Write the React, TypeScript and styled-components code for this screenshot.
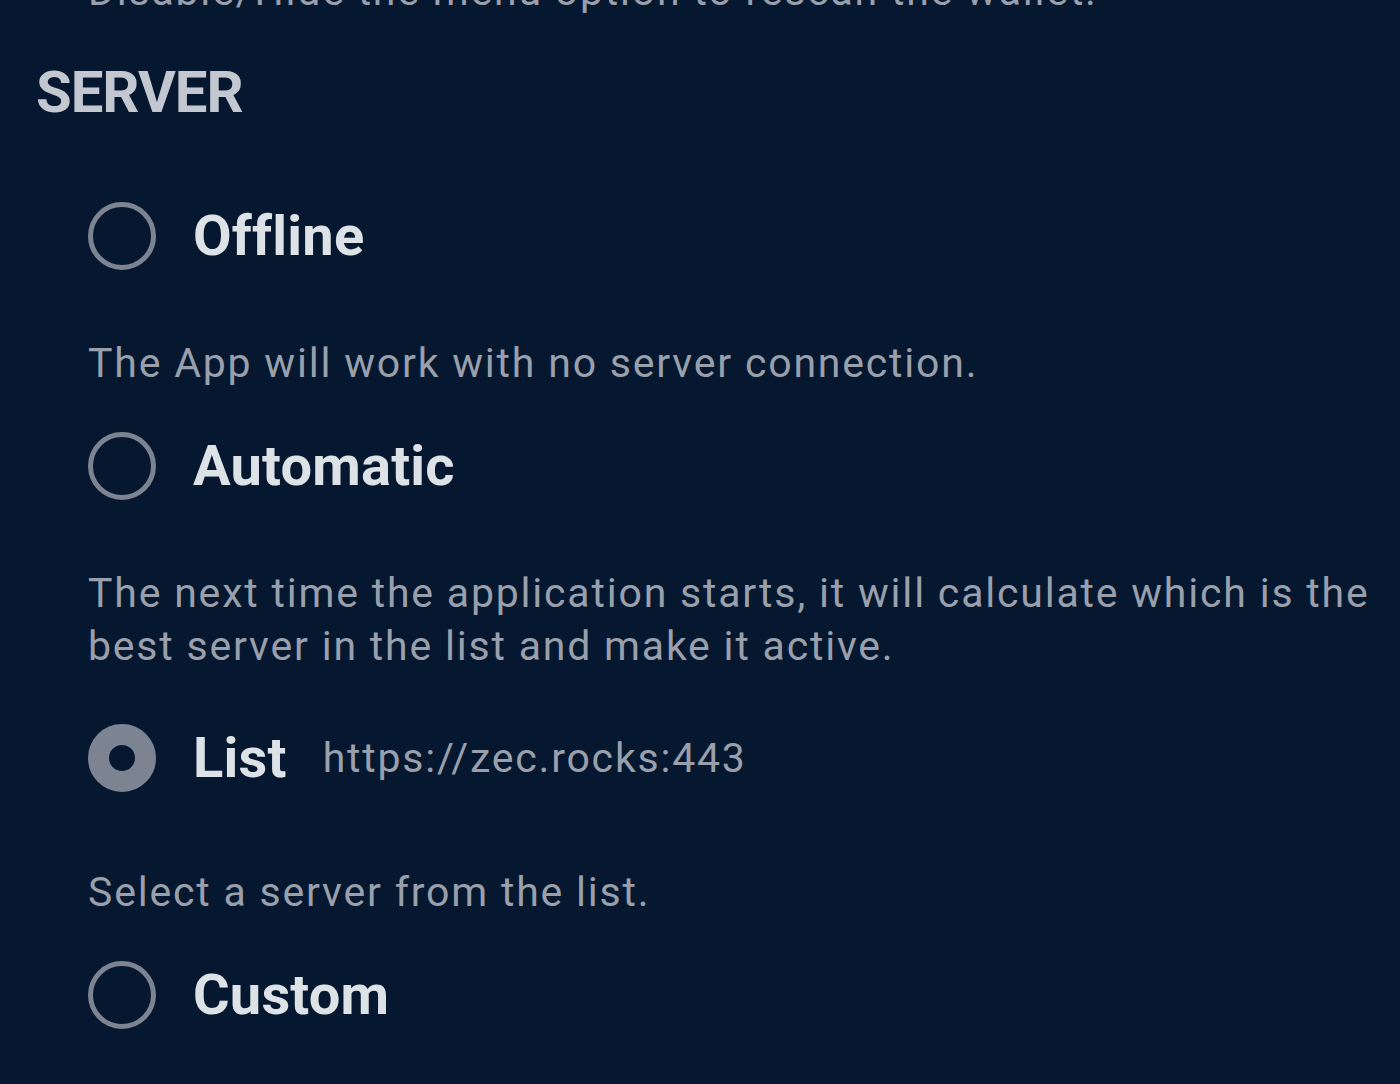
import React from 'react';
import styled, { createGlobalStyle } from 'styled-components';

const GlobalStyle = createGlobalStyle`
  html, body {
    margin: 0;
    padding: 0;
    background: #061730;
  }
  body {
    font-family: Roboto, 'Liberation Sans', sans-serif;
  }
`;

const Screen = styled.div`
  width: 1400px;
  height: 1084px;
  overflow: hidden;
  background: #061730;
  padding-left: 36px;
  box-sizing: border-box;
`;

const Note = styled.p`
  margin: -33px 0 0 52px;
  font-size: 41px;
  line-height: 48px;
  letter-spacing: 1.8px;
  color: #99a0ab;
  white-space: nowrap;
`;

const SectionTitle = styled.h2`
  margin: 43px 0 0;
  font-size: 58px;
  line-height: 68px;
  font-weight: 700;
  color: #c3c8d0;
  letter-spacing: -1px;
`;

const Options = styled.div`
  display: flex;
  flex-direction: column;
  padding-left: 52px;
  margin-top: 76px;
`;

const OptionRow = styled.label<{ $tall?: boolean }>`
  display: flex;
  align-items: center;
  gap: 37px;
  height: ${(p) => (p.$tall ? 86 : 68)}px;
`;

const Radio = styled.span<{ $checked?: boolean }>`
  flex: none;
  width: 68px;
  height: 68px;
  box-sizing: border-box;
  border-radius: 50%;
  border: ${(p) => (p.$checked ? '21px' : '5px')} solid #7c8491;
  background: ${(p) => (p.$checked ? '#061730' : 'transparent')};
`;

const OptionLabel = styled.span`
  font-size: 56px;
  line-height: 68px;
  font-weight: 700;
  color: #dde2e7;
  letter-spacing: 0.2px;
`;

const ServerUrl = styled.span`
  font-size: 41px;
  line-height: 48px;
  letter-spacing: 1.8px;
  color: #99a0ab;
  margin-left: -1px;
`;

const Description = styled.p<{ $gapBefore: number }>`
  margin: ${(p) => p.$gapBefore}px 0 42px;
  font-size: 41px;
  line-height: 53px;
  letter-spacing: 1.8px;
  color: #99a0ab;
  max-width: 1290px;
`;

type ServerOption = {
  id: string;
  label: string;
  description?: string;
  url?: string;
};

const options: ServerOption[] = [
  { id: 'offline', label: 'Offline', description: 'The App will work with no server connection.' },
  {
    id: 'auto',
    label: 'Automatic',
    description:
      'The next time the application starts, it will calculate which is the best server in the list and make it active.',
  },
  { id: 'list', label: 'List', url: 'https://zec.rocks:443', description: 'Select a server from the list.' },
  { id: 'custom', label: 'Custom' },
];

export default function App(): JSX.Element {
  const selected = 'list';

  return (
    <>
      <GlobalStyle />
      <Screen>
        <Note>Disable/Hide the menu option to rescan the wallet.</Note>
        <SectionTitle>SERVER</SectionTitle>
        <Options>
          {options.map((o) => {
            const isList = o.id === 'list';
            return (
              <React.Fragment key={o.id}>
                <OptionRow $tall={isList}>
                  <Radio $checked={o.id === selected} />
                  <OptionLabel>{o.label}</OptionLabel>
                  {o.url && <ServerUrl>{o.url}</ServerUrl>}
                </OptionRow>
                {o.description && <Description $gapBefore={isList ? 65 : 67}>{o.description}</Description>}
              </React.Fragment>
            );
          })}
        </Options>
      </Screen>
    </>
  );
}
